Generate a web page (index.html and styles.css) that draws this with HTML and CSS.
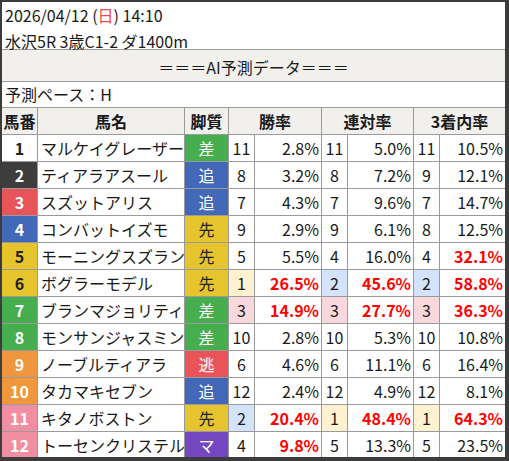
FILE: index.html
```html
<!DOCTYPE html>
<html lang="ja">
<head>
<meta charset="utf-8">
<link rel="stylesheet" href="styles.css">
</head>
<body>
<div class="frame">
  <div class="info">
    <div class="line">2026/04/12 (<span class="sun">日</span>) 14:10</div>
    <div class="line">水沢5R 3歳C1-2 ダ1400m</div>
  </div>
  <div class="band">＝＝＝AI予測データ＝＝＝</div>
  <div class="pace">予測ペース：H</div>
  <div class="grid">
    <div class="h">馬番</div><div class="h">馬名</div><div class="h">脚質</div><div class="h span2">勝率</div><div class="h span2">連対率</div><div class="h span2">3着内率</div>

    <div class="no w1">1</div><div class="nm">マルケイグレーザー</div><div class="st sa">差</div><div class="rk">11</div><div class="pc">2.8%</div><div class="rk">11</div><div class="pc">5.0%</div><div class="rk">11</div><div class="pc">10.5%</div>

    <div class="no w2">2</div><div class="nm">ティアラアスール</div><div class="st oi">追</div><div class="rk">8</div><div class="pc">3.2%</div><div class="rk">8</div><div class="pc">7.2%</div><div class="rk">9</div><div class="pc">12.1%</div>

    <div class="no w3">3</div><div class="nm">スズットアリス</div><div class="st oi">追</div><div class="rk">7</div><div class="pc">4.3%</div><div class="rk">7</div><div class="pc">9.6%</div><div class="rk">7</div><div class="pc">14.7%</div>

    <div class="no w4">4</div><div class="nm">コンバットイズモ</div><div class="st se">先</div><div class="rk">9</div><div class="pc">2.9%</div><div class="rk">9</div><div class="pc">6.1%</div><div class="rk">8</div><div class="pc">12.5%</div>

    <div class="no w5">5</div><div class="nm">モーニングスズラン</div><div class="st se">先</div><div class="rk">5</div><div class="pc">5.5%</div><div class="rk">4</div><div class="pc">16.0%</div><div class="rk">4</div><div class="pc hot">32.1%</div>

    <div class="no w5">6</div><div class="nm">ボグラーモデル</div><div class="st se">先</div><div class="rk r1">1</div><div class="pc hot">26.5%</div><div class="rk r2">2</div><div class="pc hot">45.6%</div><div class="rk r2">2</div><div class="pc hot">58.8%</div>

    <div class="no w6">7</div><div class="nm">ブランマジョリティ</div><div class="st sa">差</div><div class="rk r3">3</div><div class="pc hot">14.9%</div><div class="rk r3">3</div><div class="pc hot">27.7%</div><div class="rk r3">3</div><div class="pc hot">36.3%</div>

    <div class="no w6">8</div><div class="nm">モンサンジャスミン</div><div class="st sa">差</div><div class="rk">10</div><div class="pc">2.8%</div><div class="rk">10</div><div class="pc">5.3%</div><div class="rk">10</div><div class="pc">10.8%</div>

    <div class="no w7">9</div><div class="nm">ノーブルティアラ</div><div class="st ni">逃</div><div class="rk">6</div><div class="pc">4.6%</div><div class="rk">6</div><div class="pc">11.1%</div><div class="rk">6</div><div class="pc">16.4%</div>

    <div class="no w7">10</div><div class="nm">タカマキセブン</div><div class="st oi">追</div><div class="rk">12</div><div class="pc">2.4%</div><div class="rk">12</div><div class="pc">4.9%</div><div class="rk">12</div><div class="pc">8.1%</div>

    <div class="no w8">11</div><div class="nm">キタノボストン</div><div class="st se">先</div><div class="rk r2">2</div><div class="pc hot">20.4%</div><div class="rk r1">1</div><div class="pc hot">48.4%</div><div class="rk r1">1</div><div class="pc hot">64.3%</div>

    <div class="no w8">12</div><div class="nm">トーセンクリステル</div><div class="st ma">マ</div><div class="rk">4</div><div class="pc hot">9.8%</div><div class="rk">5</div><div class="pc">13.3%</div><div class="rk">5</div><div class="pc">23.5%</div>
  </div>
</div>
</body>
</html>
```

FILE: styles.css
```css
html, body {
  margin: 0;
  padding: 0;
  background: #3c3c3c;
}
body {
  width: 509px;
  height: 461px;
  overflow: hidden;
  font-family: "Noto Sans CJK JP", "Noto Sans", sans-serif;
  font-size: 16px;
  color: #1a1a1a;
}
.frame {
  margin: 2px 4px 0 2px;
  width: 503px;
  height: 455px;
  background: #fff;
  overflow: hidden;
}
.info {
  height: 47px;
  padding-left: 3px;
}
.line {
  height: 26px;
  line-height: 26px;
  white-space: nowrap;
}
.sun { color: #ee4b4b; }
.band {
  height: 31px;
  line-height: 34px;
  background: #f1f0ec;
  border-top: 1px solid #9a9a9a;
  border-bottom: 1px solid #9a9a9a;
  text-align: center;
}
.pace {
  height: 25px;
  line-height: 24px;
  padding-left: 3px;
}
.grid {
  display: grid;
  grid-template-columns: 35px 146px 43px 25px 66px 25px 65px 25px 65px;
  grid-auto-rows: 26px;
  gap: 1px;
  background: #9a9a9a;
  border-top: 1px solid #9a9a9a;
}
.grid > div {
  background: #fff;
  line-height: 27px;
  white-space: nowrap;
  overflow: hidden;
}
.grid > .h {
  background: #f1f0ec;
  font-weight: bold;
  text-align: center;
}
.span2 { grid-column: span 2; }
.no {
  text-align: center;
  font-weight: bold;
  color: #fff;
}
.nm { padding-left: 3px; }
.st { text-align: center; color: #fff; }
.rk { text-align: center; }
.pc { text-align: right; padding-right: 2px; }
.pc.hot { color: #ff0000; font-weight: bold; }

.grid > .w1 { background: #fff; color: #222; }
.grid > .w2 { background: #3d3d3d; }
.grid > .w3 { background: #e8545a; }
.grid > .w4 { background: #4169b7; }
.grid > .w5 { background: #e6c42e; color: #222; }
.grid > .w6 { background: #46ae4e; }
.grid > .w7 { background: #f0963c; }
.grid > .w8 { background: #f28ea2; }

.grid > .sa { background: #46ae4e; }
.grid > .oi { background: #4169b7; }
.grid > .se { background: #e6c42e; color: #222; }
.grid > .ni { background: #e8545a; }
.grid > .ma { background: #7446c0; }

.grid > .r1 { background: #fff2d1; }
.grid > .r2 { background: #d3e3fb; }
.grid > .r3 { background: #f8d8dc; }
```
